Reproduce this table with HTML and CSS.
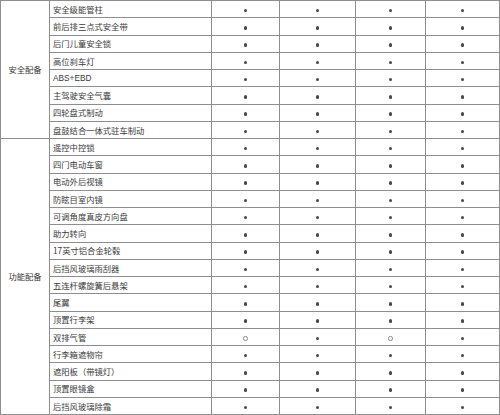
FILE: index.html
```html
<!DOCTYPE html>
<html lang="zh">
<head>
<meta charset="utf-8">
<link rel="stylesheet" href="styles.css">
</head>
<body>
<table class="spec">
  <colgroup>
    <col class="c-cat"><col class="c-item"><col class="c-a"><col class="c-b"><col class="c-c"><col class="c-d">
  </colgroup>
  <tbody>
    <tr><td class="cat" rowspan="8">安全配备</td><td class="item">安全级能管柱</td><td class="v"><i class="dot"></i></td><td class="v"><i class="dot"></i></td><td class="v"><i class="dot"></i></td><td class="v"><i class="dot"></i></td></tr>
    <tr><td class="item">前后排三点式安全带</td><td class="v"><i class="dot"></i></td><td class="v"><i class="dot"></i></td><td class="v"><i class="dot"></i></td><td class="v"><i class="dot"></i></td></tr>
    <tr><td class="item">后门儿童安全锁</td><td class="v"><i class="dot"></i></td><td class="v"><i class="dot"></i></td><td class="v"><i class="dot"></i></td><td class="v"><i class="dot"></i></td></tr>
    <tr><td class="item">高位刹车灯</td><td class="v"><i class="dot"></i></td><td class="v"><i class="dot"></i></td><td class="v"><i class="dot"></i></td><td class="v"><i class="dot"></i></td></tr>
    <tr><td class="item latin">ABS+EBD</td><td class="v"><i class="dot"></i></td><td class="v"><i class="dot"></i></td><td class="v"><i class="dot"></i></td><td class="v"><i class="dot"></i></td></tr>
    <tr><td class="item">主驾驶安全气囊</td><td class="v"><i class="dot"></i></td><td class="v"><i class="dot"></i></td><td class="v"><i class="dot"></i></td><td class="v"><i class="dot"></i></td></tr>
    <tr><td class="item">四轮盘式制动</td><td class="v"><i class="dot"></i></td><td class="v"><i class="dot"></i></td><td class="v"><i class="dot"></i></td><td class="v"><i class="dot"></i></td></tr>
    <tr><td class="item">盘鼓结合一体式驻车制动</td><td class="v"><i class="dot"></i></td><td class="v"><i class="dot"></i></td><td class="v"><i class="dot"></i></td><td class="v"><i class="dot"></i></td></tr>
    <tr><td class="cat" rowspan="16">功能配备</td><td class="item">遥控中控锁</td><td class="v"><i class="dot"></i></td><td class="v"><i class="dot"></i></td><td class="v"><i class="dot"></i></td><td class="v"><i class="dot"></i></td></tr>
    <tr><td class="item">四门电动车窗</td><td class="v"><i class="dot"></i></td><td class="v"><i class="dot"></i></td><td class="v"><i class="dot"></i></td><td class="v"><i class="dot"></i></td></tr>
    <tr><td class="item">电动外后视镜</td><td class="v"><i class="dot"></i></td><td class="v"><i class="dot"></i></td><td class="v"><i class="dot"></i></td><td class="v"><i class="dot"></i></td></tr>
    <tr><td class="item">防眩目室内镜</td><td class="v"><i class="dot"></i></td><td class="v"><i class="dot"></i></td><td class="v"><i class="dot"></i></td><td class="v"><i class="dot"></i></td></tr>
    <tr><td class="item">可调角度真皮方向盘</td><td class="v"><i class="dot"></i></td><td class="v"><i class="dot"></i></td><td class="v"><i class="dot"></i></td><td class="v"><i class="dot"></i></td></tr>
    <tr><td class="item">助力转向</td><td class="v"><i class="dot"></i></td><td class="v"><i class="dot"></i></td><td class="v"><i class="dot"></i></td><td class="v"><i class="dot"></i></td></tr>
    <tr><td class="item">17英寸铝合金轮毂</td><td class="v"><i class="dot"></i></td><td class="v"><i class="dot"></i></td><td class="v"><i class="dot"></i></td><td class="v"><i class="dot"></i></td></tr>
    <tr><td class="item">后挡风玻璃雨刮器</td><td class="v"><i class="dot"></i></td><td class="v"><i class="dot"></i></td><td class="v"><i class="dot"></i></td><td class="v"><i class="dot"></i></td></tr>
    <tr><td class="item">五连杆螺旋簧后悬架</td><td class="v"><i class="dot"></i></td><td class="v"><i class="dot"></i></td><td class="v"><i class="dot"></i></td><td class="v"><i class="dot"></i></td></tr>
    <tr><td class="item">尾翼</td><td class="v"><i class="dot"></i></td><td class="v"><i class="dot"></i></td><td class="v"><i class="dot"></i></td><td class="v"><i class="dot"></i></td></tr>
    <tr><td class="item">顶置行李架</td><td class="v"><i class="dot"></i></td><td class="v"><i class="dot"></i></td><td class="v"><i class="dot"></i></td><td class="v"><i class="dot"></i></td></tr>
    <tr><td class="item">双排气管</td><td class="v"><i class="dot hollow"></i></td><td class="v"><i class="dot"></i></td><td class="v"><i class="dot hollow"></i></td><td class="v"><i class="dot"></i></td></tr>
    <tr><td class="item">行李箱遮物帘</td><td class="v"><i class="dot"></i></td><td class="v"><i class="dot"></i></td><td class="v"><i class="dot"></i></td><td class="v"><i class="dot"></i></td></tr>
    <tr><td class="item">遮阳板（带镜灯）</td><td class="v"><i class="dot"></i></td><td class="v"><i class="dot"></i></td><td class="v"><i class="dot"></i></td><td class="v"><i class="dot"></i></td></tr>
    <tr><td class="item">顶置眼镜盒</td><td class="v"><i class="dot"></i></td><td class="v"><i class="dot"></i></td><td class="v"><i class="dot"></i></td><td class="v"><i class="dot"></i></td></tr>
    <tr><td class="item">后挡风玻璃除霜</td><td class="v"><i class="dot"></i></td><td class="v"><i class="dot"></i></td><td class="v"><i class="dot"></i></td><td class="v"><i class="dot"></i></td></tr>
  </tbody>
</table>
</body>
</html>
```

FILE: styles.css
```css
html, body {
  margin: 0;
  padding: 0;
  background: #ffffff;
}

.spec {
  border-collapse: collapse;
  table-layout: fixed;
  width: 500px;
  font-family: "Noto Sans CJK SC", "Liberation Sans", sans-serif;
  font-size: 8.3px;
  color: #3a3a3a;
}

.c-cat { width: 49px; }
.c-item { width: 162px; }
.c-a { width: 68px; }
.c-b { width: 76px; }
.c-c { width: 70px; }
.c-d { width: 74px; }

.spec tr {
  height: 17.25px;
}

.spec td {
  border: 1px solid #8e8e8e;
  padding: 0;
  line-height: 1;
}

.cat {
  text-align: center;
  vertical-align: middle;
  border-left-color: #d0d0d0;
}

.item {
  padding-left: 3px !important;
  text-align: left;
}

.latin {
  font-family: "Liberation Sans", sans-serif;
}

.v {
  text-align: center;
  vertical-align: middle;
}

.dot {
  display: inline-block;
  width: 3.5px;
  height: 3.5px;
  border-radius: 50%;
  background: #474747;
  vertical-align: middle;
}

.dot.hollow {
  width: 2.5px;
  height: 2.5px;
  background: transparent;
  border: 0.75px solid #8a8a8a;
}
```
